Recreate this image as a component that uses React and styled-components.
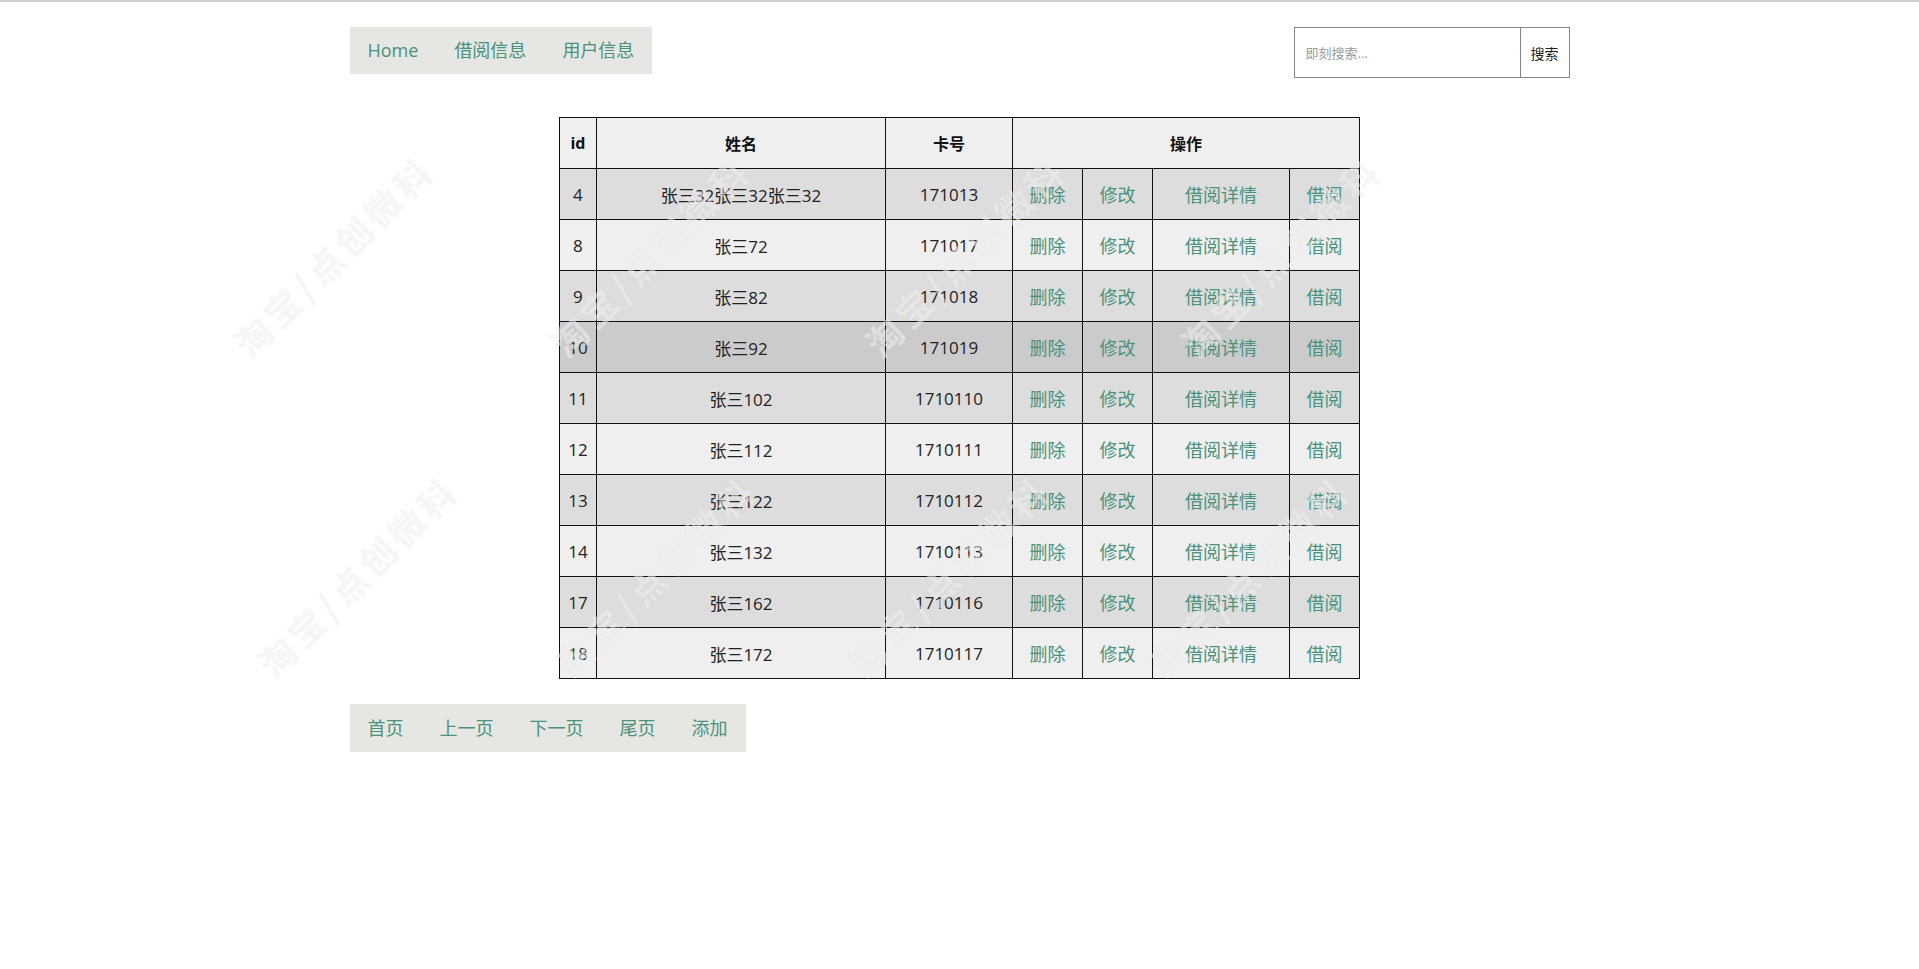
import React from "react";
import styled, { createGlobalStyle } from "styled-components";

const GlobalStyle = createGlobalStyle`
  html, body {
    margin: 0;
    padding: 0;
    background: #ffffff;
  }
  body {
    font-family: "Open Sans", "Noto Sans CJK SC", sans-serif;
    color: #222;
    border-top: 2px solid #cfcfcf;
  }
  * { box-sizing: border-box; }
`;

const Page = styled.div`
  position: relative;
  min-height: 967px;
  overflow: hidden;
`;

const Container = styled.div`
  width: 1220px;
  margin: 0 auto;
  padding-top: 25px;
`;

const HeaderRow = styled.div`
  display: flex;
  justify-content: space-between;
  align-items: flex-start;
`;

const LinkBar = styled.nav`
  display: inline-flex;
  background: #e6e6e3;
  height: ${(p) => p.$h}px;
`;

const BarLink = styled.a`
  display: block;
  padding: 0 18px;
  line-height: ${(p) => p.$h}px;
  font-size: 18px;
  color: #4a927c;
  text-decoration: none;
  white-space: nowrap;
  cursor: pointer;
`;

const SearchForm = styled.form`
  display: flex;
  height: 51px;
  width: 276px;
  border: 1px solid #858585;
  background: #fff;
`;

const SearchInput = styled.input`
  flex: 1;
  min-width: 0;
  border: none;
  border-right: 1px solid #858585;
  padding: 0 11px;
  font-family: "Open Sans", "Noto Sans CJK SC", sans-serif;
  font-size: 13px;
  color: #333;
  outline: none;
  &::placeholder {
    color: #9a9a9a;
  }
`;

const SearchButton = styled.button`
  width: 48px;
  border: none;
  background: #fff;
  padding: 0;
  font-family: "Open Sans", "Noto Sans CJK SC", sans-serif;
  font-size: 14px;
  color: #222;
`;

const Table = styled.table`
  width: 800px;
  margin: 39px auto 0;
  border-collapse: collapse;
  table-layout: fixed;
`;

const HeadCell = styled.th`
  height: 51px;
  padding: 0;
  border: 1px solid #111;
  background: #efefef;
  font-size: 16px;
  font-weight: 700;
  color: #111;
  text-align: center;
`;

const Row = styled.tr`
  background: ${(p) => p.$bg};
`;

const Cell = styled.td`
  height: 51px;
  padding: 0;
  border: 1px solid #111;
  font-size: 17px;
  color: #222;
  text-align: center;
  white-space: nowrap;
`;

const CellLink = styled.a`
  font-size: 18px;
  color: #4a927c;
  text-decoration: none;
  cursor: pointer;
`;

const Pager = styled.div`
  margin-top: 25px;
`;

const Watermark = styled.div`
  position: absolute;
  left: ${(p) => p.$x}px;
  top: ${(p) => p.$y}px;
  transform: translate(-50%, -50%) rotate(-45deg);
  font-family: "Noto Sans CJK SC", sans-serif;
  font-size: 36px;
  font-weight: 700;
  letter-spacing: 5px;
  white-space: nowrap;
  color: rgba(255, 255, 255, 0.5);
  text-shadow: 0 0 1px rgba(0, 0, 0, 0.07);
  pointer-events: none;
  user-select: none;
`;

const rows = [
  { id: 4, name: "张三32张三32张三32", card: "171013" },
  { id: 8, name: "张三72", card: "171017" },
  { id: 9, name: "张三82", card: "171018" },
  { id: 10, name: "张三92", card: "171019", hover: true },
  { id: 11, name: "张三102", card: "1710110" },
  { id: 12, name: "张三112", card: "1710111" },
  { id: 13, name: "张三122", card: "1710112" },
  { id: 14, name: "张三132", card: "1710113" },
  { id: 17, name: "张三162", card: "1710116" },
  { id: 18, name: "张三172", card: "1710117" },
];

const colWidths = [37, 289, 127, 70, 70, 137, 70];

const marks = [
  [333, 253], [649, 253], [964, 253], [1280, 253],
  [357, 573], [655, 573], [948, 573], [1248, 573],
];

export default function App() {
  return (
    <Page>
      <GlobalStyle />
      <Container>
        <HeaderRow>
          <LinkBar $h={47}>
            <BarLink $h={47}>Home</BarLink>
            <BarLink $h={47}>借阅信息</BarLink>
            <BarLink $h={47}>用户信息</BarLink>
          </LinkBar>
          <SearchForm onSubmit={(e) => e.preventDefault()}>
            <SearchInput placeholder="即刻搜索..." />
            <SearchButton type="submit">搜索</SearchButton>
          </SearchForm>
        </HeaderRow>

        <Table>
          <colgroup>
            {colWidths.map((w, i) => (
              <col key={i} width={w} />
            ))}
          </colgroup>
          <thead>
            <tr>
              <HeadCell>id</HeadCell>
              <HeadCell>姓名</HeadCell>
              <HeadCell>卡号</HeadCell>
              <HeadCell colSpan={4}>操作</HeadCell>
            </tr>
          </thead>
          <tbody>
            {rows.map((r, i) => (
              <Row key={r.id} $bg={r.hover ? "#cbcbcb" : i % 2 === 0 ? "#dddddd" : "#efefef"}>
                <Cell>{r.id}</Cell>
                <Cell>{r.name}</Cell>
                <Cell>{r.card}</Cell>
                <Cell><CellLink>删除</CellLink></Cell>
                <Cell><CellLink>修改</CellLink></Cell>
                <Cell><CellLink>借阅详情</CellLink></Cell>
                <Cell><CellLink>借阅</CellLink></Cell>
              </Row>
            ))}
          </tbody>
        </Table>

        <Pager>
          <LinkBar as="div" $h={48}>
            <BarLink $h={48}>首页</BarLink>
            <BarLink $h={48}>上一页</BarLink>
            <BarLink $h={48}>下一页</BarLink>
            <BarLink $h={48}>尾页</BarLink>
            <BarLink $h={48}>添加</BarLink>
          </LinkBar>
        </Pager>
      </Container>
      {marks.map(([x, y], i) => (
        <Watermark key={i} $x={x} $y={y}>淘宝/点创微科</Watermark>
      ))}
    </Page>
  );
}
